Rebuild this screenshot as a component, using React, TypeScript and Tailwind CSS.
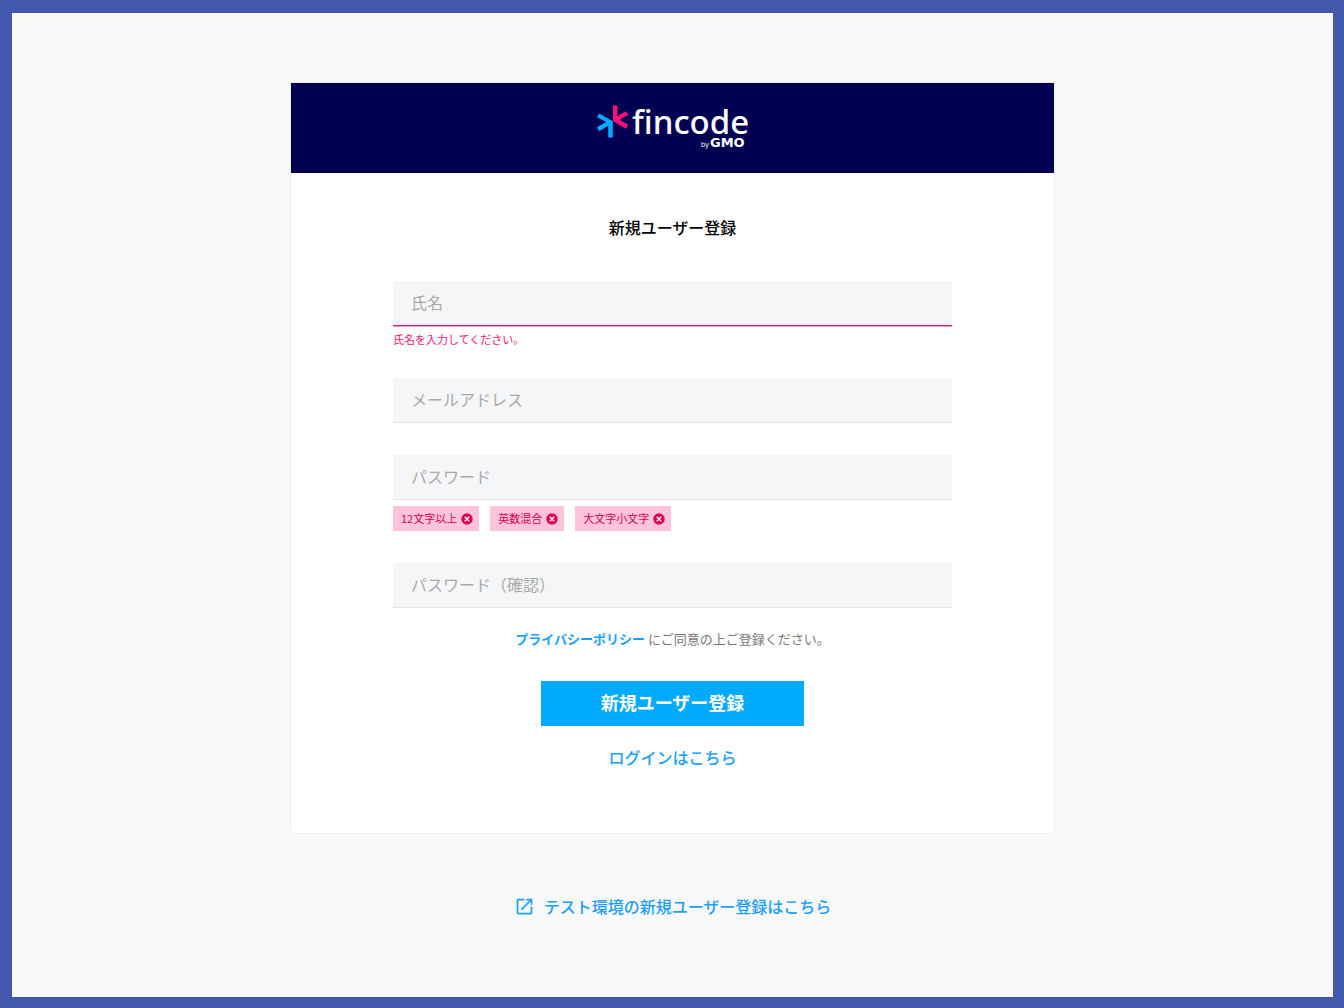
import React from 'react';

interface FieldProps {
  id: string;
  label: string;
  type?: string;
  error?: string;
  children?: React.ReactNode;
}

const Field: React.FC<FieldProps> = ({ id, label, type = 'text', error, children }) => {
  return (
    <div>
      <div className="relative">
        <input
          id={id}
          name={id}
          type={type}
          placeholder=" "
          aria-invalid={!!error}
          className={`peer block h-[45px] w-full border-b bg-[#f5f6f8] px-[18px] text-base text-[#333] outline-none ${
            error ? 'border-[#e8126c] shadow-[0_1px_0_#ff9cc6]' : 'border-[#e3e4e6]'
          }`}
        />
        <label
          htmlFor={id}
          className="pointer-events-none absolute inset-y-0 left-[18px] flex items-center pb-[3px] text-base text-[#a9a9a9] peer-focus:hidden peer-[:not(:placeholder-shown)]:hidden"
        >
          {label}
        </label>
      </div>
      {error && <p className="mt-[3px] h-5 text-[11px] leading-5 text-[#ff0f6e]">{error}</p>}
      {children}
    </div>
  );
};

const Rule: React.FC<{ text: string }> = ({ text }) => (
  <li className="flex h-[25px] items-center gap-1 bg-[#ffc4dc] pl-2 pr-[6px] text-[11px] text-[#d6004f]">
    {text}
    <svg viewBox="0 0 12 12" className="size-3" aria-hidden="true">
      <circle cx="6" cy="6" r="5.7" fill="#d6004f" />
      <path d="M3.8 3.8l4.4 4.4M8.2 3.8l-4.4 4.4" stroke="#ffe3ee" strokeWidth="1.6" />
    </svg>
  </li>
);

const Logo: React.FC = () => (
  <svg viewBox="0 0 152 46" className="h-[46px] w-[152px] overflow-visible" role="img" aria-label="fincode by GMO">
    <g fill="#00aaff">
      <path d="M2.2 8.5L12.8 14.6L15.8 16V32.5H11.2V20.7L2.2 26.2L0 22.3L9.2 17L0 12.2Z" />
    </g>
    <g fill="#ff0f78">
      <path d="M16 0.5H20.4V11.3L29 6.2L31.3 9.8L22.6 14.8L31.3 19.8L29 23.8L16 16.2Z" />
    </g>
    <text x="35" y="29" fill="#fff" className="font-['Noto_Sans',sans-serif] text-[33px] font-medium [font-variant-ligatures:none]">fincode</text>
    <text x="104" y="42" fill="#fff" className="font-['Noto_Sans',sans-serif] text-[7px]">by</text>
    <text x="113" y="42" fill="#fff" className="font-['DejaVu_Sans',sans-serif] text-[13px] font-bold">GMO</text>
  </svg>
);

const App: React.FC = () => {
  return (
    <div className="min-h-screen border-[12px] border-t-[13px] border-r-[11px] border-b-[11px] border-[#4259ae] bg-[#f9f9f9] px-4 pt-[70px] font-['Noto_Sans_CJK_JP','Noto_Sans',sans-serif]">
      <main className="mx-auto max-w-[763px] overflow-hidden rounded-b bg-white shadow-[0_0_0_1px_#ececec]">
        <header className="flex h-[90px] items-center justify-center bg-[#000052]">
          <Logo />
        </header>
        <form className="mx-auto flex max-w-[559px] flex-col pt-[42px] pb-16" onSubmit={(e) => e.preventDefault()}>
          <h1 className="mb-[42px] text-center text-base font-medium text-black">新規ユーザー登録</h1>
          <div className="flex flex-col gap-8">
            <div className="-mb-[3px]">
              <Field id="name" label="氏名" error="氏名を入力してください。" />
            </div>
            <Field id="email" label="メールアドレス" type="email" />
            <Field id="password" label="パスワード" type="password">
              <ul className="mt-[6px] flex gap-[11px]">
                <Rule text="12文字以上" />
                <Rule text="英数混合" />
                <Rule text="大文字小文字" />
              </ul>
            </Field>
            <Field id="password-confirm" label="パスワード（確認）" type="password" />
          </div>
          <p className="mt-[19px] text-center text-[13px] leading-6 text-[#777]">
            <a href="#privacy" className="font-bold text-[#1a9fff]">プライバシーポリシー</a> にご同意の上ご登録ください。
          </p>
          <button type="submit" className="mx-auto mt-[30px] h-[45px] w-[263px] bg-[#00aaff] pb-1 text-lg font-bold text-white">
            新規ユーザー登録
          </button>
          <a href="#login" className="mx-auto mt-[19px] text-base font-medium text-[#1a9fff]">ログインはこちら</a>
        </form>
      </main>
      <footer className="mt-[61px] pb-10 text-center">
        <a href="#test" className="inline-flex items-center gap-[9px] text-base font-medium text-[#1a9fff]">
          <svg viewBox="0 0 24 24" className="size-[21px]" fill="currentColor" aria-hidden="true">
            <path d="M19 19H5V5h7V3H5a2 2 0 0 0-2 2v14a2 2 0 0 0 2 2h14c1.1 0 2-.9 2-2v-7h-2v7zM14 3v2h3.59l-9.83 9.83 1.41 1.41L19 6.41V10h2V3h-7z" />
          </svg>
          テスト環境の新規ユーザー登録はこちら
        </a>
      </footer>
    </div>
  );
};

export default App;
